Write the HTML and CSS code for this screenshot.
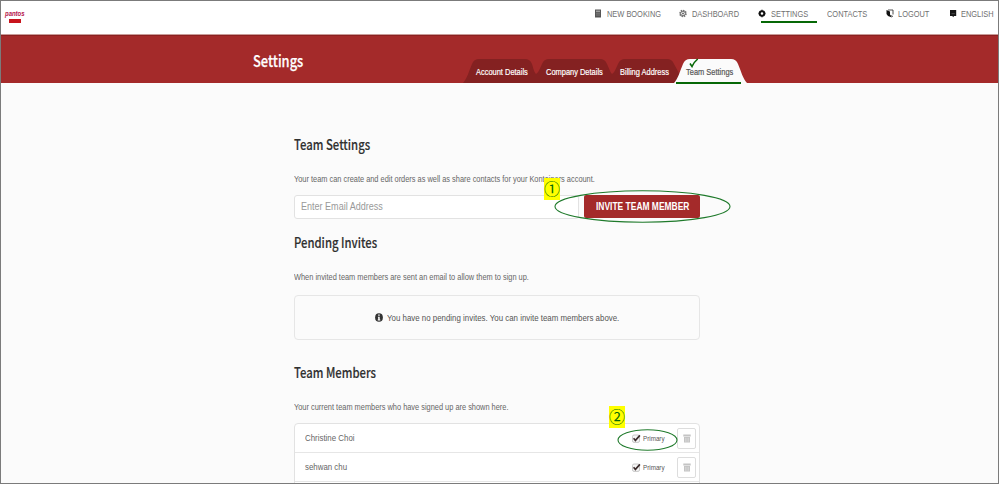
FILE: index.html
```html
<!DOCTYPE html>
<html lang="en">
<head>
<meta charset="utf-8">
<title>Team Settings</title>
<link rel="stylesheet" href="styles.css">
</head>
<body>
<div class="page">
  <header class="topbar">
    <div class="logo"><span class="logo-name">pantos</span><span class="logo-tag"></span></div>
    <nav class="nav">
      <a class="nav-item booking"><svg viewBox="0 0 8 9"><path fill="#555" d="M1 .5h6v8H1z"/><path stroke="#ddd" stroke-width=".8" d="M2 2.2h4"/><path stroke="#999" stroke-width=".6" d="M2 4.2h4M2 6h4"/></svg><span class="label">NEW BOOKING</span></a>
      <a class="nav-item dashboard"><svg viewBox="0 0 8 9"><circle cx="4" cy="4.5" r="3" fill="none" stroke="#777" stroke-width="1.6" stroke-dasharray="1.5 .8"/><circle cx="4" cy="4.5" r="2.3" fill="none" stroke="#555" stroke-width=".8"/><circle cx="4" cy="4.5" r=".9" fill="#555"/></svg><span class="label">DASHBOARD</span></a>
      <a class="nav-item settings"><svg viewBox="0 0 8 9"><circle cx="4" cy="4.5" r="2.3" fill="none" stroke="#111" stroke-width="2"/><path stroke="#111" stroke-width="1.4" d="M4 .8v1M4 7.2v1M.6 4.5h1M6.4 4.5h1"/></svg><span class="label">SETTINGS</span></a>
      <a class="nav-item contacts"><span class="label">CONTACTS</span></a>
      <a class="nav-item logout"><svg viewBox="0 0 8 9"><path fill="#111" d="M.5 1 4 2.5v3L6 8.5 2 7 .5 5z"/><path fill="none" stroke="#222" stroke-width=".8" d="M2 1h5v4.5M4.5 6.5l2.5 1"/></svg><span class="label">LOGOUT</span></a>
      <a class="nav-item english"><svg viewBox="0 0 8 9"><path fill="#151515" d="M1 1h6.2v6H5L4.2 8.2 3.3 7H1z"/><path stroke="#777" stroke-width=".6" d="M2.5 4.7h3.3"/></svg><span class="label">ENGLISH</span></a>
    </nav>
  </header>
  <section class="banner">
    <h1>Settings</h1>
    <div class="tabs">
      <div class="tab account"><svg viewBox="0 0 73 24"><path d="M0 24C4 20 6 12 9 5Q11 0 16 0H62Q67 0 69 5C70 8 71 13 73 15V24z"/></svg><span class="label">Account Details</span></div>
      <div class="tab company"><svg viewBox="0 0 76 24"><path d="M0 24V15C3 13 4 9 6 5Q8 0 13 0H64Q69 0 71 5C73 9 74 13 76 15V24z"/></svg><span class="label">Company Details</span></div>
      <div class="tab billing"><svg viewBox="0 0 68 24"><path d="M0 24V15C3 13 4 9 6 5Q8 0 13 0H55Q60 0 62 5L68 16V24z"/></svg><span class="label">Billing Address</span></div>
      <div class="tab active"><svg viewBox="0 0 73 24"><path d="M0 24C4 20 6 12 9 5Q11 0 16 0H57Q62 0 64 5C67 12 69 20 73 24z"/></svg><span class="label">Team Settings</span><svg class="tick" viewBox="0 0 10 10"><path d="M1 5.5 3 8.5Q5 4 8.7 1"/></svg></div>
    </div>
  </section>
  <main class="content">
    <h2>Team Settings</h2>
    <p><span class="label">Your team can create and edit orders as well as share contacts for your Kontainers account.</span></p>
    <div class="invite">
      <div class="field"><span class="label">Enter Email Address</span></div>
      <button class="button"><span class="label">INVITE TEAM MEMBER</span></button>
      <svg class="ring ring-invite" viewBox="0 0 177 33"><ellipse cx="88.5" cy="16.5" rx="87.5" ry="15.7"/></svg>
      <span class="marker marker-one">①</span>
    </div>
    <h2 class="pending-title">Pending Invites</h2>
    <p><span class="label">When invited team members are sent an email to allow them to sign up.</span></p>
    <div class="notice"><svg viewBox="0 0 8 9"><ellipse cx="4" cy="4.5" rx="3.9" ry="4.3" fill="#333"/><path fill="#fff" d="M3.2 1.5h1.5v1.3H3.2zM2.9 3.7h1.8v2.9h.6v.8H2.7v-.8h.5V4.5h-.3z"/></svg><span class="label">You have no pending invites. You can invite team members above.</span></div>
    <h2 class="members-title">Team Members</h2>
    <p><span class="label">Your current team members who have signed up are shown here.</span></p>
    <div class="members">
      <div class="member"><span class="name"><span class="label">Christine Choi</span></span><svg class="check" viewBox="0 0 9 9"><rect x=".5" y="1" width="7" height="7.4" rx="1.5" fill="#f5f5f5" stroke="#bbb" stroke-width=".8"/><path d="M1.6 4.2 3.4 6.4 7.9 1.4" fill="none" stroke="#3b2b2b" stroke-width="1.6"/></svg><span class="primary"><span class="label">Primary</span></span><span class="trash"><svg viewBox="0 0 8 9"><path fill="#c4c4c4" d="M.3.5h7.4v2H.3zM1 3h6v5.6H1z"/><path stroke="#ddd" stroke-width=".7" d="M2.6 3.8v4M4 3.8v4M5.4 3.8v4"/></svg></span>
        <svg class="ring ring-primary" viewBox="0 0 61 22"><ellipse cx="30.5" cy="11" rx="29.5" ry="10.3"/></svg>
        <span class="marker marker-two">②</span></div>
      <div class="member"><span class="name"><span class="label">sehwan chu</span></span><svg class="check" viewBox="0 0 9 9"><rect x=".5" y="1" width="7" height="7.4" rx="1.5" fill="#f5f5f5" stroke="#bbb" stroke-width=".8"/><path d="M1.6 4.2 3.4 6.4 7.9 1.4" fill="none" stroke="#3b2b2b" stroke-width="1.6"/></svg><span class="primary"><span class="label">Primary</span></span><span class="trash"><svg viewBox="0 0 8 9"><path fill="#c4c4c4" d="M.3.5h7.4v2H.3zM1 3h6v5.6H1z"/><path stroke="#ddd" stroke-width=".7" d="M2.6 3.8v4M4 3.8v4M5.4 3.8v4"/></svg></span></div>
      <div class="member"></div>
    </div>
  </main>
</div>
</body>
</html>
```
FILE: styles.css
```css
* { box-sizing: border-box; }
body { margin: 0; overflow: hidden; font-family: "Liberation Sans", Arial, sans-serif; }
.page { width: 999px; height: 484px; overflow: hidden; border: 1px solid #7b7b7b; background: #fbfbfb; color: #666; font-size: 9px; }
.label { display: inline-block; white-space: nowrap; transform: scaleX(.825); transform-origin: 0 50%; }

.topbar { height: 34px; display: flex; justify-content: space-between; background: #fff; border-bottom: 1px solid #c99b98; }
.logo { width: 30px; padding: 8px 0 0 4px; line-height: 9px; }
.logo-name { display: block; font: italic bold 7px/9px "Liberation Sans", sans-serif; color: #b5124a; transform: scaleX(.85); transform-origin: 0 50%; }
.logo-tag { display: block; width: 12px; height: 4px; margin: 1px 0 0 4px; background: #c8141c; }
.nav { display: flex; padding-top: 8px; height: 12px; line-height: 11px; }
.nav-item { display: flex; height: 12px; color: #707070; }
.nav-item svg { width: 8px; height: 9px; margin: 0 5px 0 0; flex: none; }
.nav-item .label { width: 0; }
.booking { width: 85px; }
.dashboard { width: 79px; }
.settings { position: relative; width: 69px; }
.settings::after { content: ""; position: absolute; left: 3px; top: 12px; width: 56px; height: 2px; background: #066806; }
.contacts { width: 59px; }
.logout { width: 63px; }
.english { width: 49px; }
.logout .label, .english .label { margin-left: -1px; }

.banner { height: 48px; display: flex; background: #a42a2a; border-top: 1px solid #8b2020; padding-left: 252px; }
h1 { width: 210px; margin: 11px 0 0; font: 500 16px/26px "Noto Sans CJK KR", sans-serif; color: #fff; -webkit-text-stroke: .25px; transform: scaleX(.805); transform-origin: 0 50%; }
.tabs { display: flex; padding-top: 23px; height: 48px; }
.tab { position: relative; height: 24px; padding: 7px 0 0 13px; font-size: 9.5px; line-height: 11px; color: #fff; }
.tab > svg:first-child { position: absolute; left: 0; top: 0; width: 100%; height: 100%; fill: #842121; }
.tab .label { position: relative; width: 0; -webkit-text-stroke: .2px; transform: scaleX(.785); }
.account { width: 73px; }
.company { width: 76px; padding-left: 9.5px; }
.billing { width: 68px; padding-left: 8px; }
.tab.active { width: 73px; margin-left: -6px; padding-left: 12px; color: #555; }
.tab.active > svg:first-child { fill: #fbfbfb; }
.tab.active::after { content: ""; position: absolute; left: 2px; top: 23px; width: 65px; height: 2px; background: #066806; }
.tab .tick { position: absolute; left: 15px; top: -1px; width: 10px; height: 10px; fill: none; stroke: #066806; stroke-width: 1.6; }

.content { width: 406px; margin: 49px 0 0 293px; }
h2 { margin: 0; height: 24px; font: 500 14px/24px "Noto Sans CJK KR", sans-serif; color: #303030; -webkit-text-stroke: .15px; transform: scaleX(.808); transform-origin: 0 50%; }
p { margin: 17px 0 0; height: 12px; font-size: 9.5px; line-height: 12px; color: #666; }
p .label { transform: scaleX(.779); }
.invite { position: relative; display: flex; justify-content: space-between; margin-top: 10px; height: 24px; }
.field { width: 285px; height: 24px; border: 1px solid #e2e2e2; border-radius: 3px; background: #fff; padding: 0 6px; line-height: 21px; font-size: 10.5px; color: #999; }
.field .label { transform: scaleX(.86); }
.button { width: 116px; height: 23px; border: 0; border-radius: 2px; background: #a42a2a; padding: 0 0 0 12px; text-align: left; color: #fff; font: bold 10px/23px "Liberation Sans", sans-serif; }
.button .label { transform: scaleX(.845); }
.ring { position: absolute; fill: none; stroke: #1f7a2b; stroke-width: 1.1; }
.ring-invite { left: 260px; top: -5px; width: 177px; height: 33px; }
.marker { position: absolute; width: 16px; height: 22px; background: #ff0; color: #066806; font: 400 16px/21px "Noto Sans CJK KR", sans-serif; text-align: center; }
.marker-one { left: 250px; top: -17px; }
.pending-title { margin-top: 11px; }
.pending-title + p { margin-top: 17px; }
.notice { display: flex; align-items: center; height: 45px; margin-top: 12px; padding-left: 80px; border: 1px solid #e6e6e6; border-radius: 4px; font-size: 9.5px; color: #555; }
.notice svg { width: 8px; height: 9px; margin-right: 4px; }
.notice .label { transform: scaleX(.831); }
.members-title { margin-top: 20px; }
.members-title + p { margin-top: 17px; }
.members { margin-top: 10px; border: 1px solid #e2e2e2; border-radius: 4px; background: #fff; height: 100px; }
.member { position: relative; display: flex; align-items: center; height: 29px; border-bottom: 1px solid #e6e6e6; }
.name { width: 327px; padding: 0 0 1px 10px; font-size: 9.5px; }
.name .label { transform: scaleX(.83); }
.name, .primary { flex: none; }
.check { width: 9px; height: 9px; margin-left: 10px; }
.primary { width: 34px; margin-left: 2px; font-size: 7.6px; color: #555; }
.trash { display: flex; align-items: center; justify-content: center; width: 19px; height: 21px; border: 1px solid #ddd; border-radius: 2px; }
.trash svg { width: 8px; height: 9px; }
.ring-primary { left: 322px; top: 5px; width: 61px; height: 22px; }
.marker-two { left: 314px; top: -18px; }
```
